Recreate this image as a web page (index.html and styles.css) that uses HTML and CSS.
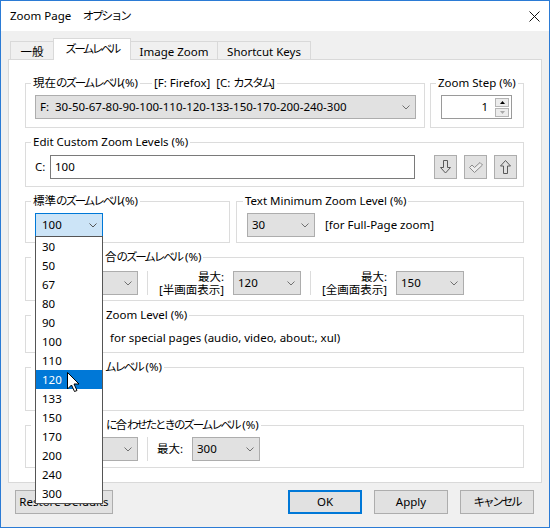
FILE: index.html
```html
<!DOCTYPE html>
<html lang="ja">
<head>
<meta charset="utf-8">
<title>Zoom Page オプション</title>
<link rel="stylesheet" href="styles.css">
</head>
<body>
<div class="window">
  <div class="titlebar">
    <span class="title">Zoom Page　<span class="k">オプション</span></span>
    <svg class="close" width="11" height="11" viewBox="0 0 11 11"><path d="M0.5 0.5 L10.5 10.5 M10.5 0.5 L0.5 10.5" stroke="#111" stroke-width="1" fill="none"/></svg>
  </div>
  <div class="content">
    <div class="tabs">
      <div class="tab t1">一般</div>
      <div class="tab t2 active"><span class="k k-tab">ズームレベル</span></div>
      <div class="tab t3">Image Zoom</div>
      <div class="tab t4">Shortcut Keys</div>
    </div>
    <div class="panel">
      <div class="row">
        <div class="group g-current h45">
          <div class="legend"><span>現在<span class="k">のズームレベル</span>(%)</span><span class="leg2">[F: Firefox]&nbsp;&nbsp;[C: <span class="k">カスタム</span>]</span></div>
          <div class="gbody">
            <div class="select wide"><span>F:&nbsp;&nbsp;30-50-67-80-90-100-110-120-133-150-170-200-240-300</span><svg class="chev" width="8" height="5" viewBox="0 0 8 5"><path d="M0.5 0.5 L4 4 L7.5 0.5" fill="none" stroke="#707070"/></svg></div>
          </div>
        </div>
        <div class="group g-step h45">
          <div class="legend"><span>Zoom Step (%)</span></div>
          <div class="gbody">
            <div class="spin">
              <span class="spin-val">1</span>
              <div class="spin-btns">
                <span class="sb"><svg width="5" height="3" viewBox="0 0 5 3"><path d="M0 3 L2.5 0 L5 3 Z" fill="#000"/></svg></span>
                <span class="sb"><svg width="5" height="3" viewBox="0 0 5 3"><path d="M0 0 L2.5 3 L5 0 Z" fill="#a8a8a8"/></svg></span>
              </div>
            </div>
          </div>
        </div>
      </div>

      <div class="group h45">
        <div class="legend"><span>Edit Custom Zoom Levels (%)</span></div>
        <div class="gbody mt5">
          <span class="c-label">C:</span>
          <div class="input">100</div>
          <div class="ibtn first"><svg width="11" height="14" viewBox="0 0 11 14"><path d="M3.5 0.5 H7.5 V7.5 H10.5 L5.5 13 L0.5 7.5 H3.5 Z" fill="none" stroke="#5a5a5a"/></svg></div>
          <div class="ibtn"><svg width="14" height="11" viewBox="0 0 14 11"><path d="M0.5 5.5 L3 3 L5.5 5.5 L11 0.5 L13.5 3 L5.5 10.5 Z" fill="#ececec" stroke="#8a8a8a"/></svg></div>
          <div class="ibtn"><svg width="11" height="14" viewBox="0 0 11 14"><path d="M5.5 0.5 L10.5 6 H7.5 V13.5 H3.5 V6 H0.5 Z" fill="none" stroke="#5a5a5a"/></svg></div>
        </div>
      </div>

      <div class="row r3">
        <div class="group g-default h42">
          <div class="legend"><span>標準<span class="k">のズームレベル</span>(%)</span></div>
          <div class="gbody">
            <div class="dd-wrap">
              <div class="select w68 active"><span>100</span><svg class="chev" width="8" height="5" viewBox="0 0 8 5"><path d="M0.5 0.5 L4 4 L7.5 0.5" fill="none" stroke="#555"/></svg></div>
              <div class="dropdown">
                <div>30</div><div>50</div><div>67</div><div>80</div><div>90</div><div>100</div><div>110</div>
                <div class="sel">120</div>
                <div>133</div><div>150</div><div>170</div><div>200</div><div>240</div><div>300</div>
                <svg class="cursor" width="13" height="21" viewBox="0 0 13 21"><path d="M0.5 0.5 L0.5 17 L4.5 13 L7.5 19.5 L10 18.5 L7 12 L12 12 Z" fill="#fff" stroke="#000" stroke-width="1" stroke-linejoin="round"/></svg>
              </div>
            </div>
          </div>
        </div>
        <div class="group g-text h42">
          <div class="legend"><span>Text Minimum Zoom Level (%)</span></div>
          <div class="gbody">
            <div class="select w68"><span>30</span><svg class="chev" width="8" height="5" viewBox="0 0 8 5"><path d="M0.5 0.5 L4 4 L7.5 0.5" fill="none" stroke="#707070"/></svg></div>
            <span class="note">[for Full-Page zoom]</span>
          </div>
        </div>
      </div>

      <div class="group h44">
        <div class="legend"><span><i class="hid w72"></i>合<span class="k">のズームレベル</span> (%)</span></div>
        <div class="gbody mt5 triple">
          <i class="hid w26"></i>
          <div class="select w68"><span></span><svg class="chev" width="8" height="5" viewBox="0 0 8 5"><path d="M0.5 0.5 L4 4 L7.5 0.5" fill="none" stroke="#707070"/></svg></div>
          <span class="vsep"></span>
          <span class="lbl-two">最大:<br>[半画面表示]</span>
          <div class="select w68"><span>120</span><svg class="chev" width="8" height="5" viewBox="0 0 8 5"><path d="M0.5 0.5 L4 4 L7.5 0.5" fill="none" stroke="#707070"/></svg></div>
          <span class="vsep"></span>
          <span class="lbl-two">最大:<br>[全画面表示]</span>
          <div class="select w68"><span>150</span><svg class="chev" width="8" height="5" viewBox="0 0 8 5"><path d="M0.5 0.5 L4 4 L7.5 0.5" fill="none" stroke="#707070"/></svg></div>
        </div>
      </div>

      <div class="group h38">
        <div class="legend"><span><i class="hid w73"></i>Zoom Level (%)</span></div>
        <div class="gbody mt7">
          <i class="hid w75"></i>
          <span>for special pages (audio, video, about:, xul)</span>
        </div>
      </div>

      <div class="group h44">
        <div class="legend"><span><i class="hid w72"></i><span class="k">ムレベル</span> (%)</span></div>
        <div class="gbody"></div>
      </div>

      <div class="group h43">
        <div class="legend"><span><i class="hid w73"></i><span class="k">に</span>合<span class="k">わせたときのズームレベル</span> (%)</span></div>
        <div class="gbody triple">
          <i class="hid w26"></i>
          <div class="select w68"><span></span><svg class="chev" width="8" height="5" viewBox="0 0 8 5"><path d="M0.5 0.5 L4 4 L7.5 0.5" fill="none" stroke="#707070"/></svg></div>
          <span class="vsep"></span>
          <span class="lbl-max">最大:</span>
          <div class="select w68"><span>300</span><svg class="chev" width="8" height="5" viewBox="0 0 8 5"><path d="M0.5 0.5 L4 4 L7.5 0.5" fill="none" stroke="#707070"/></svg></div>
        </div>
      </div>
    </div>

    <div class="buttons">
      <div class="btn restore">Restore Defaults</div>
      <div class="btn std ok">OK</div>
      <div class="btn std">Apply</div>
      <div class="btn std"><span class="k">キャンセル</span></div>
    </div>
  </div>
</div>
</body>
</html>
```

FILE: styles.css
```css
* { box-sizing: border-box; }

body { margin: 0; }

.window {
  width: 550px;
  height: 528px;
  border: 1px solid #2b7bd5;
  background: #f0f0f0;
  font-family: "Noto Sans", "Noto Sans CJK JP", sans-serif;
  font-size: 11.5px;
  line-height: 16px;
  color: #000;
  display: flex;
  flex-direction: column;
}

/* kana runs: the reference UI font has narrow kana */
.k { letter-spacing: -2.1px; }
.k.k-tab { letter-spacing: -2.5px; }

.hid { display: inline-block; height: 1px; flex: none; }
.w26 { width: 26px; }
.w72 { width: 72px; }
.w73 { width: 73px; }
.w75 { width: 75px; }

.titlebar {
  height: 30px;
  flex: none;
  background: #fff;
  display: flex;
  align-items: center;
  justify-content: space-between;
  padding: 0 9px 0 9px;
}

.content { padding: 7px 7px 0 7px; }

.tabs {
  display: flex;
  align-items: flex-end;
  height: 22px;
  margin-bottom: -1px;
  padding-left: 2px;
  position: relative;
  z-index: 1;
}

.tab {
  height: 18px;
  margin-bottom: 1px;
  margin-left: -1px;
  border: 1px solid #d9d9d9;
  border-bottom: 0;
  background: #f0f0f0;
  display: flex;
  align-items: center;
  justify-content: center;
  padding-top: 2px;
  white-space: nowrap;
}

.tab.t1 { margin-left: 0; width: 44px; }
.tab.t2 { width: 78px; }
.tab.t3 { width: 88px; }
.tab.t4 { width: 94px; }

.tab.active {
  height: 22px;
  margin-bottom: 0;
  background: #fff;
  position: relative;
  z-index: 2;
  padding-top: 0;
  padding-bottom: 1px;
}

.panel {
  height: 424px;
  border: 1px solid #d9d9d9;
  background: #fff;
  padding: 23px 17px 0 16px;
  display: flex;
  flex-direction: column;
  gap: 14px;
}

.row { display: flex; gap: 5px; }
.row.r3 { gap: 6px; }

.group {
  border: 1px solid #dcdcdc;
  padding: 0 9px;
  flex: none;
}

.h38 { height: 38px; }
.h42 { height: 42px; }
.h43 { height: 43px; }
.h44 { height: 44px; }
.h45 { height: 45px; }

.g-current { width: 400px; }
.g-step { width: 94px; }
.g-default { width: 205px; }
.g-text { width: 288px; padding-left: 10px; }

.legend {
  display: flex;
  height: 16px;
  margin: -9px 0 0 -4px;
  white-space: nowrap;
}

.legend > span { background: #fff; padding: 0 2px; }
.legend .leg2 { margin-left: 12px; }

.gbody {
  display: flex;
  align-items: center;
  margin-top: 4px;
  white-space: nowrap;
}

.mt5 { margin-top: 5px; }
.mt7 { margin-top: 7px; }

.select {
  height: 24px;
  border: 1px solid #adadad;
  background: #e1e1e1;
  display: flex;
  align-items: center;
  justify-content: space-between;
  padding: 0 5px 0 4px;
  white-space: nowrap;
  flex: none;
}

.select.w68 { width: 68px; }
.select.wide { width: 381px; }

.select.active {
  background: #cce4f7;
  border-color: #0078d7;
  padding-left: 6px;
}

.chev { flex: none; }

.spin {
  width: 71px;
  height: 24px;
  margin-left: 1px;
  border: 1px solid #9a9a9a;
  background: #fff;
  display: flex;
  align-items: center;
}

.spin-val { flex: 1; text-align: right; padding-right: 7px; }

.spin-btns {
  width: 14px;
  margin-right: 2px;
  display: flex;
  flex-direction: column;
  gap: 1px;
}

.sb {
  height: 9px;
  border: 1px solid #b5b5b5;
  background: #ececec;
  display: flex;
  align-items: center;
  justify-content: center;
}

.c-label { width: 15px; flex: none; }

.input {
  width: 365px;
  height: 24px;
  border: 1px solid #7a7a7a;
  background: #fff;
  padding-left: 4px;
  display: flex;
  align-items: center;
  flex: none;
}

.ibtn {
  width: 23px;
  height: 24px;
  margin-left: 7px;
  border: 1px solid #adadad;
  background: #e1e1e1;
  display: flex;
  align-items: center;
  justify-content: center;
  flex: none;
}

.ibtn.first { margin-left: 19px; }

.note { margin-left: 10px; }

.dd-wrap { position: relative; }

.dropdown {
  position: absolute;
  left: 0;
  top: calc(100% - 1px);
  width: 68px;
  border: 1px solid #555;
  background: #fff;
  z-index: 10;
}

.dropdown div {
  height: 19px;
  line-height: 19px;
  padding-left: 6px;
}

.dropdown .sel { background: #0078d7; color: #fff; }

.cursor { position: absolute; left: 31px; top: 135px; }

.triple { gap: 9px; }

.lbl-max { width: 26px; flex: none; }

.lbl-two {
  width: 67px;
  flex: none;
  text-align: right;
  line-height: 13px;
}

.vsep {
  width: 1px;
  height: 24px;
  background: #dcdcdc;
  flex: none;
}

.buttons {
  display: flex;
  margin-top: 7px;
  padding: 0 8px 0 7px;
}

.btn {
  height: 24px;
  border: 1px solid #adadad;
  background: #e1e1e1;
  display: flex;
  align-items: center;
  justify-content: center;
  white-space: nowrap;
}

.btn.restore { width: 98px; margin-right: auto; }
.btn.std { width: 74px; margin-left: 12px; }
.btn.ok { border: 2px solid #0078d7; }
```
